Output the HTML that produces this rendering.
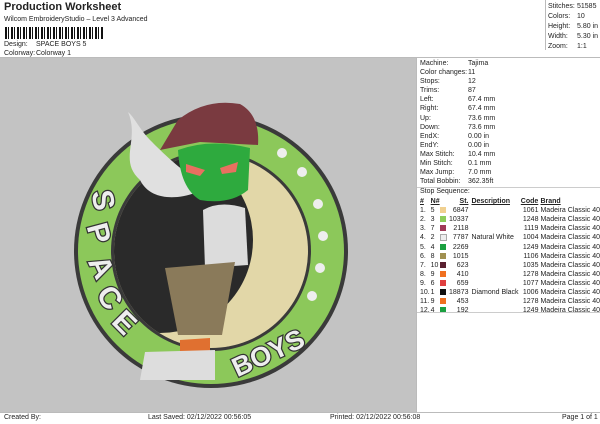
<!DOCTYPE html><html><head><style>
body{margin:0;width:600px;height:424px;background:#fff;font-family:"Liberation Sans",sans-serif;position:relative;overflow:hidden;color:#222}
.a{position:absolute;font-size:7px;white-space:nowrap}
table{border-collapse:collapse}
td{font-size:7px;padding:0;height:9.1px;white-space:nowrap}
.sw{display:inline-block;width:6px;height:6px;vertical-align:middle}
</style></head><body>
<div class="a" style="left:4px;top:1px;font-size:11px;font-weight:bold">Production Worksheet</div>
<div class="a" style="left:4px;top:16px">Wilcom EmbroideryStudio – Level 3 Advanced</div>
<div style="position:absolute;left:5px;top:27px;width:98px;height:12px;background:repeating-linear-gradient(90deg,#111 0 2px,#fff 2px 3px,#111 3px 4px,#fff 4px 6px)"></div>
<div class="a" style="left:4px;top:41px">Design:</div><div class="a" style="left:36px;top:41px">SPACE BOYS 5</div>
<div class="a" style="left:4px;top:50px">Colorway:</div><div class="a" style="left:36px;top:50px">Colorway 1</div>
<div style="position:absolute;left:545px;top:0;width:1px;height:50px;background:#bbb"></div>
<div class="a" style="left:548px;top:2px;line-height:10px">Stitches:<br>Colors:<br>Height:<br>Width:<br>Zoom:</div>
<div class="a" style="left:577px;top:2px;line-height:10px">51585<br>10<br>5.80 in<br>5.30 in<br>1:1</div>
<div style="position:absolute;left:0;top:57px;width:600px;height:1px;background:#bbb"></div>
<div style="position:absolute;left:0;top:58px;width:416px;height:354px;background:#c3c3c3"></div>
<div style="position:absolute;left:416px;top:58px;width:1px;height:354px;background:#bbb"></div>
<svg style="position:absolute;left:0;top:58px" width="416" height="354" viewBox="0 58 416 354">
<defs><clipPath id="c"><circle cx="211" cy="251" r="97"/></clipPath></defs>
<circle cx="211" cy="251" r="137" fill="#3a3a3a"/>
<circle cx="211" cy="251" r="133" fill="#8cc85a"/>
<circle cx="211" cy="251" r="100" fill="#3a3a3a"/>
<g clip-path="url(#c)">
<rect x="100" y="150" width="220" height="210" fill="#e2d7a8"/>
<circle cx="160" cy="240" r="93" fill="#2a2a2a"/>
</g>
<g fill="#eee" stroke="#333" stroke-width="2.5" paint-order="stroke" font-weight="bold" font-size="30" font-family="Liberation Sans">
<text x="89" y="215" transform="rotate(80 104 205)">S</text>
<text x="85" y="248" transform="rotate(75 100 238)">P</text>
<text x="88" y="281" transform="rotate(65 103 271)">A</text>
<text x="97" y="311" transform="rotate(55 112 301)">C</text>
<text x="113" y="336" transform="rotate(45 128 326)">E</text>
<text x="226" y="364" font-size="27" transform="rotate(-25 262 345)">BOYS</text>
</g>
<g fill="#eee"><circle cx="282" cy="153" r="5"/><circle cx="302" cy="172" r="5"/><circle cx="318" cy="204" r="5"/><circle cx="323" cy="236" r="5"/><circle cx="320" cy="268" r="5"/><circle cx="312" cy="296" r="5"/></g>
<path d="M128 112 C140 140 118 160 140 180 C150 200 175 200 195 193 L190 175 C175 165 160 150 150 140 C140 130 135 118 128 112Z" fill="#e0e0e0"/>
<path d="M160 150 L178 120 Q205 98 240 104 Q260 115 258 145 L200 142 Z" fill="#7a3a40"/>
<path d="M178 150 Q210 138 250 148 L248 190 Q230 205 200 200 Q180 188 178 150Z" fill="#2eaa3e"/>
<path d="M186 164 L205 170 L200 176 L186 172Z M220 168 L238 162 L236 172 L222 174Z" fill="#e87060"/>
<path d="M203 210 Q220 200 245 208 L248 265 L205 268Z" fill="#dcdcdc"/>
<path d="M165 268 L235 262 L222 335 L178 335Z" fill="#8a7a5a"/>
<path d="M180 340 L210 338 L210 352 L180 352Z" fill="#e07030"/>
<path d="M145 352 L215 350 L215 380 L140 380Z" fill="#ddd"/>
</svg>
<div style="position:absolute;left:0;top:412px;width:600px;height:1px;background:#bbb"></div>
<div class="a" style="left:4px;top:414px">Created By:</div>
<div class="a" style="left:148px;top:414px">Last Saved: 02/12/2022 00:56:05</div>
<div class="a" style="left:330px;top:414px">Printed: 02/12/2022 00:56:08</div>
<div class="a" style="left:562px;top:414px">Page 1 of 1</div>
<div class="a" style="left:420px;top:59px;line-height:9.1px">Machine:<br>Color changes:<br>Stops:<br>Trims:<br>Left:<br>Right:<br>Up:<br>Down:<br>EndX:<br>EndY:<br>Max Stitch:<br>Min Stitch:<br>Max Jump:<br>Total Bobbin:</div>
<div class="a" style="left:468px;top:59px;line-height:9.1px">Tajima<br>11<br>12<br>87<br>67.4 mm<br>67.4 mm<br>73.6 mm<br>73.6 mm<br>0.00 in<br>0.00 in<br>10.4 mm<br>0.1 mm<br>7.0 mm<br>362.35ft</div>
<div style="position:absolute;left:417px;top:187px;width:183px;height:1px;background:#ccc"></div>
<div class="a" style="left:420px;top:188px">Stop Sequence:</div>
<table style="position:absolute;left:420px;top:197px">
<tr style="font-weight:bold"><td style="width:13px"><u>#</u></td><td style="width:10px"><u>N#</u></td><td style="width:10px"></td><td style="width:24px;text-align:right"><u>St.</u></td><td style="width:55px;padding-left:3px"><u>Description</u></td><td style="width:18px"><u>Code</u></td><td style="padding-left:2px"><u>Brand</u></td></tr>
<tr><td>1.</td><td>5</td><td><span class="sw" style="background:#f0d090"></span></td><td align=right>6847</td><td></td><td align=right>1061</td><td style="padding-left:2px">Madeira Classic 40</td></tr>
<tr><td>2.</td><td>3</td><td><span class="sw" style="background:#8ccc5a"></span></td><td align=right>10337</td><td></td><td align=right>1248</td><td style="padding-left:2px">Madeira Classic 40</td></tr>
<tr><td>3.</td><td>7</td><td><span class="sw" style="background:#a03a58"></span></td><td align=right>2118</td><td></td><td align=right>1119</td><td style="padding-left:2px">Madeira Classic 40</td></tr>
<tr><td>4.</td><td>2</td><td><span class="sw" style="background:#eee;border:1px solid #aaa;width:5px;height:5px"></span></td><td align=right>7787</td><td style="padding-left:3px">Natural White</td><td align=right>1004</td><td style="padding-left:2px">Madeira Classic 40</td></tr>
<tr><td>5.</td><td>4</td><td><span class="sw" style="background:#1aa040"></span></td><td align=right>2269</td><td></td><td align=right>1249</td><td style="padding-left:2px">Madeira Classic 40</td></tr>
<tr><td>6.</td><td>8</td><td><span class="sw" style="background:#a09050"></span></td><td align=right>1015</td><td></td><td align=right>1106</td><td style="padding-left:2px">Madeira Classic 40</td></tr>
<tr><td>7.</td><td>10</td><td><span class="sw" style="background:#5a2030"></span></td><td align=right>623</td><td></td><td align=right>1035</td><td style="padding-left:2px">Madeira Classic 40</td></tr>
<tr><td>8.</td><td>9</td><td><span class="sw" style="background:#f07020"></span></td><td align=right>410</td><td></td><td align=right>1278</td><td style="padding-left:2px">Madeira Classic 40</td></tr>
<tr><td>9.</td><td>6</td><td><span class="sw" style="background:#e04040"></span></td><td align=right>659</td><td></td><td align=right>1077</td><td style="padding-left:2px">Madeira Classic 40</td></tr>
<tr><td>10.</td><td>1</td><td><span class="sw" style="background:#111"></span></td><td align=right>18873</td><td style="padding-left:3px">Diamond Black</td><td align=right>1006</td><td style="padding-left:2px">Madeira Classic 40</td></tr>
<tr><td>11.</td><td>9</td><td><span class="sw" style="background:#f07020"></span></td><td align=right>453</td><td></td><td align=right>1278</td><td style="padding-left:2px">Madeira Classic 40</td></tr>
<tr><td>12.</td><td>4</td><td><span class="sw" style="background:#1aa040"></span></td><td align=right>192</td><td></td><td align=right>1249</td><td style="padding-left:2px">Madeira Classic 40</td></tr>
</table>
<div style="position:absolute;left:417px;top:312px;width:183px;height:1px;background:#ccc"></div>
</body></html>
